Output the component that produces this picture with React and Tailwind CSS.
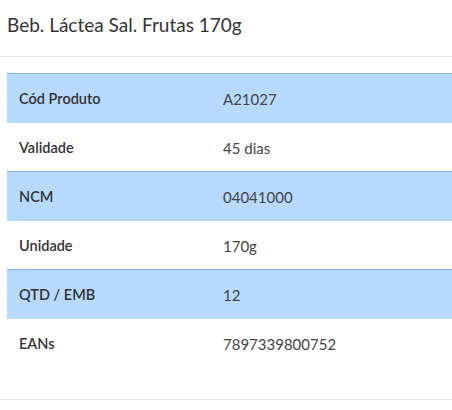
// Product detail sheet
import React from 'react';

const rows = [
  { label: 'Cód Produto', value: 'A21027' },
  { label: 'Validade', value: '45 dias' },
  { label: 'NCM', value: '04041000' },
  { label: 'Unidade', value: '170g' },
  { label: 'QTD / EMB', value: '12' },
  { label: 'EANs', value: '7897339800752' },
];

export default function App() {
  return (
    <div className="w-[452px] h-[410px] bg-white overflow-hidden font-['Lato',sans-serif]">
      <div className="h-[57px] border-b border-[#e3e3e3] px-[7px] pt-[13px]">
        <h1 className="text-[19px] leading-[24px] text-[#333]">Beb. Láctea Sal. Frutas 170g</h1>
      </div>
      <div className="pl-[7px] pt-[16px]">
        <table className="w-[460px] border-collapse">
          <tbody>
            {rows.map((row, i) => (
              <tr
                key={row.label}
                className={i % 2 === 0 ? 'bg-[#b7d9fd] border-t border-[#7ab8f5]' : 'bg-white'}
              >
                <td className="w-[204px] h-[49px] pl-3 pt-[2px] text-[14.5px] font-semibold text-[#333]">{row.label}</td>
                <td className="h-[49px] pl-3 pt-[2px] text-[15px] text-[#444]">{row.value}</td>
              </tr>
            ))}
          </tbody>
        </table>
      </div>
      <div className="mt-[31px] border-t border-[#e3e3e3]" />
    </div>
  );
}
